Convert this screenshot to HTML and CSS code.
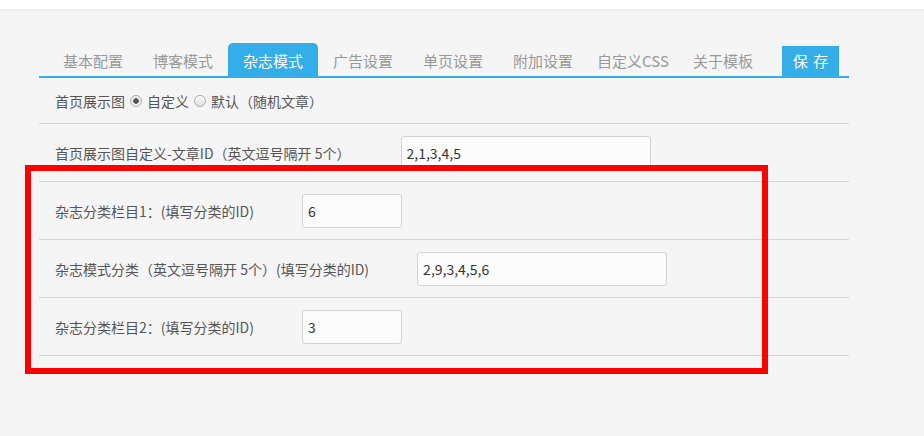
FILE: index.html
```html
<!DOCTYPE html>
<html>
	<head>
		<meta charset="UTF-8">
		<title>主题设置</title>
		<link rel="stylesheet" href="styles.css">
	</head>
	<body>
		<div class="topbar"></div>
		<div class="main">
			<ul class="tabs">
				<li class="tab">基本配置</li>
				<li class="tab">博客模式</li>
				<li class="tab active">杂志模式</li>
				<li class="tab">广告设置</li>
				<li class="tab">单页设置</li>
				<li class="tab">附加设置</li>
				<li class="tab">自定义CSS</li>
				<li class="tab">关于模板</li>
				<li><button class="save">保 存</button></li>
			</ul>
			<div class="row row-radio">
				<span>首页展示图</span>
				<input type="radio" name="pic" id="pic1" checked>
				<label for="pic1">自定义</label>
				<input type="radio" name="pic" id="pic2">
				<label for="pic2">默认（随机文章）</label>
			</div>
			<div class="row ids">
				<label>首页展示图自定义-文章ID（英文逗号隔开 5个）</label>
				<input type="text" class="wide" value="2,1,3,4,5">
			</div>
			<div class="row">
				<label>杂志分类栏目1：(填写分类的ID)</label>
				<input type="text" class="short" value="6">
			</div>
			<div class="row">
				<label>杂志模式分类（英文逗号隔开 5个）(填写分类的ID)</label>
				<input type="text" class="wide" value="2,9,3,4,5,6">
			</div>
			<div class="row">
				<label>杂志分类栏目2：(填写分类的ID)</label>
				<input type="text" class="short" value="3">
			</div>
		</div>
		<!-- 标注框 -->
		<div class="mark"></div>
	</body>
</html>
```

FILE: styles.css
```css
*{
	margin: 0;
	padding: 0;
	list-style: none;
	box-sizing: border-box;
}
body{
	background: #f5f5f5;
	font-family: "Noto Sans CJK SC", "Liberation Sans", sans-serif;
	font-size: 14px;
	color: #555;
}
.topbar{
	height: 9px;
	background: #fff;
	box-shadow: 0 1px 3px rgba(0,0,0,0.07);
}
.main{
	width: 810px;
	margin: 34px 0 0 39px;
}
.tabs{
	display: flex;
	align-items: flex-end;
	padding-left: 9px;
	border-bottom: 2px solid #33aee9;
}
.tab{
	width: 90px;
	height: 33px;
	padding-top: 3px;
	line-height: 30px;
	text-align: center;
	font-size: 15px;
	color: #999;
	cursor: pointer;
}
.tab.active{
	background: #33aee9;
	color: #fff;
	border-radius: 5px 5px 0 0;
}
.save{
	display: block;
	width: 57px;
	height: 30px;
	margin-left: 14px;
	border: none;
	background: #33aee9;
	color: #fff;
	font-family: inherit;
	font-size: 15px;
	line-height: 30px;
	word-spacing: 2px;
	cursor: pointer;
}
.row{
	display: flex;
	align-items: center;
	height: 58px;
	padding-left: 16px;
	border-bottom: 1px solid #d6d6d6;
	line-height: 20px;
}
.row-radio{
	height: 46px;
}
.row-radio input{
	-webkit-appearance: none;
	appearance: none;
	width: 12px;
	height: 12px;
	margin: 1px 5px 0;
	border: 1px solid #aaa;
	border-radius: 50%;
	background: linear-gradient(#fff, #dcdcdc);
}
.row-radio input:checked{
	background: radial-gradient(circle, #555 0, #555 2.5px, #e6e6e6 3px, #fff 6px);
}
.row input[type=text]{
	height: 34px;
	margin-left: 48px;
	padding: 0 5px;
	border: 1px solid #d3d3d3;
	border-radius: 3px;
	background: #fcfcfc;
	font-family: inherit;
	font-size: 14px;
	color: #333;
}
.ids input[type=text]{
	margin-left: 50px;
}
.wide{
	width: 250px;
}
.short{
	width: 100px;
}
.mark{
	position: absolute;
	left: 25px;
	top: 165px;
	width: 743px;
	height: 209px;
	border: 6px solid #f00;
	pointer-events: none;
}
```
